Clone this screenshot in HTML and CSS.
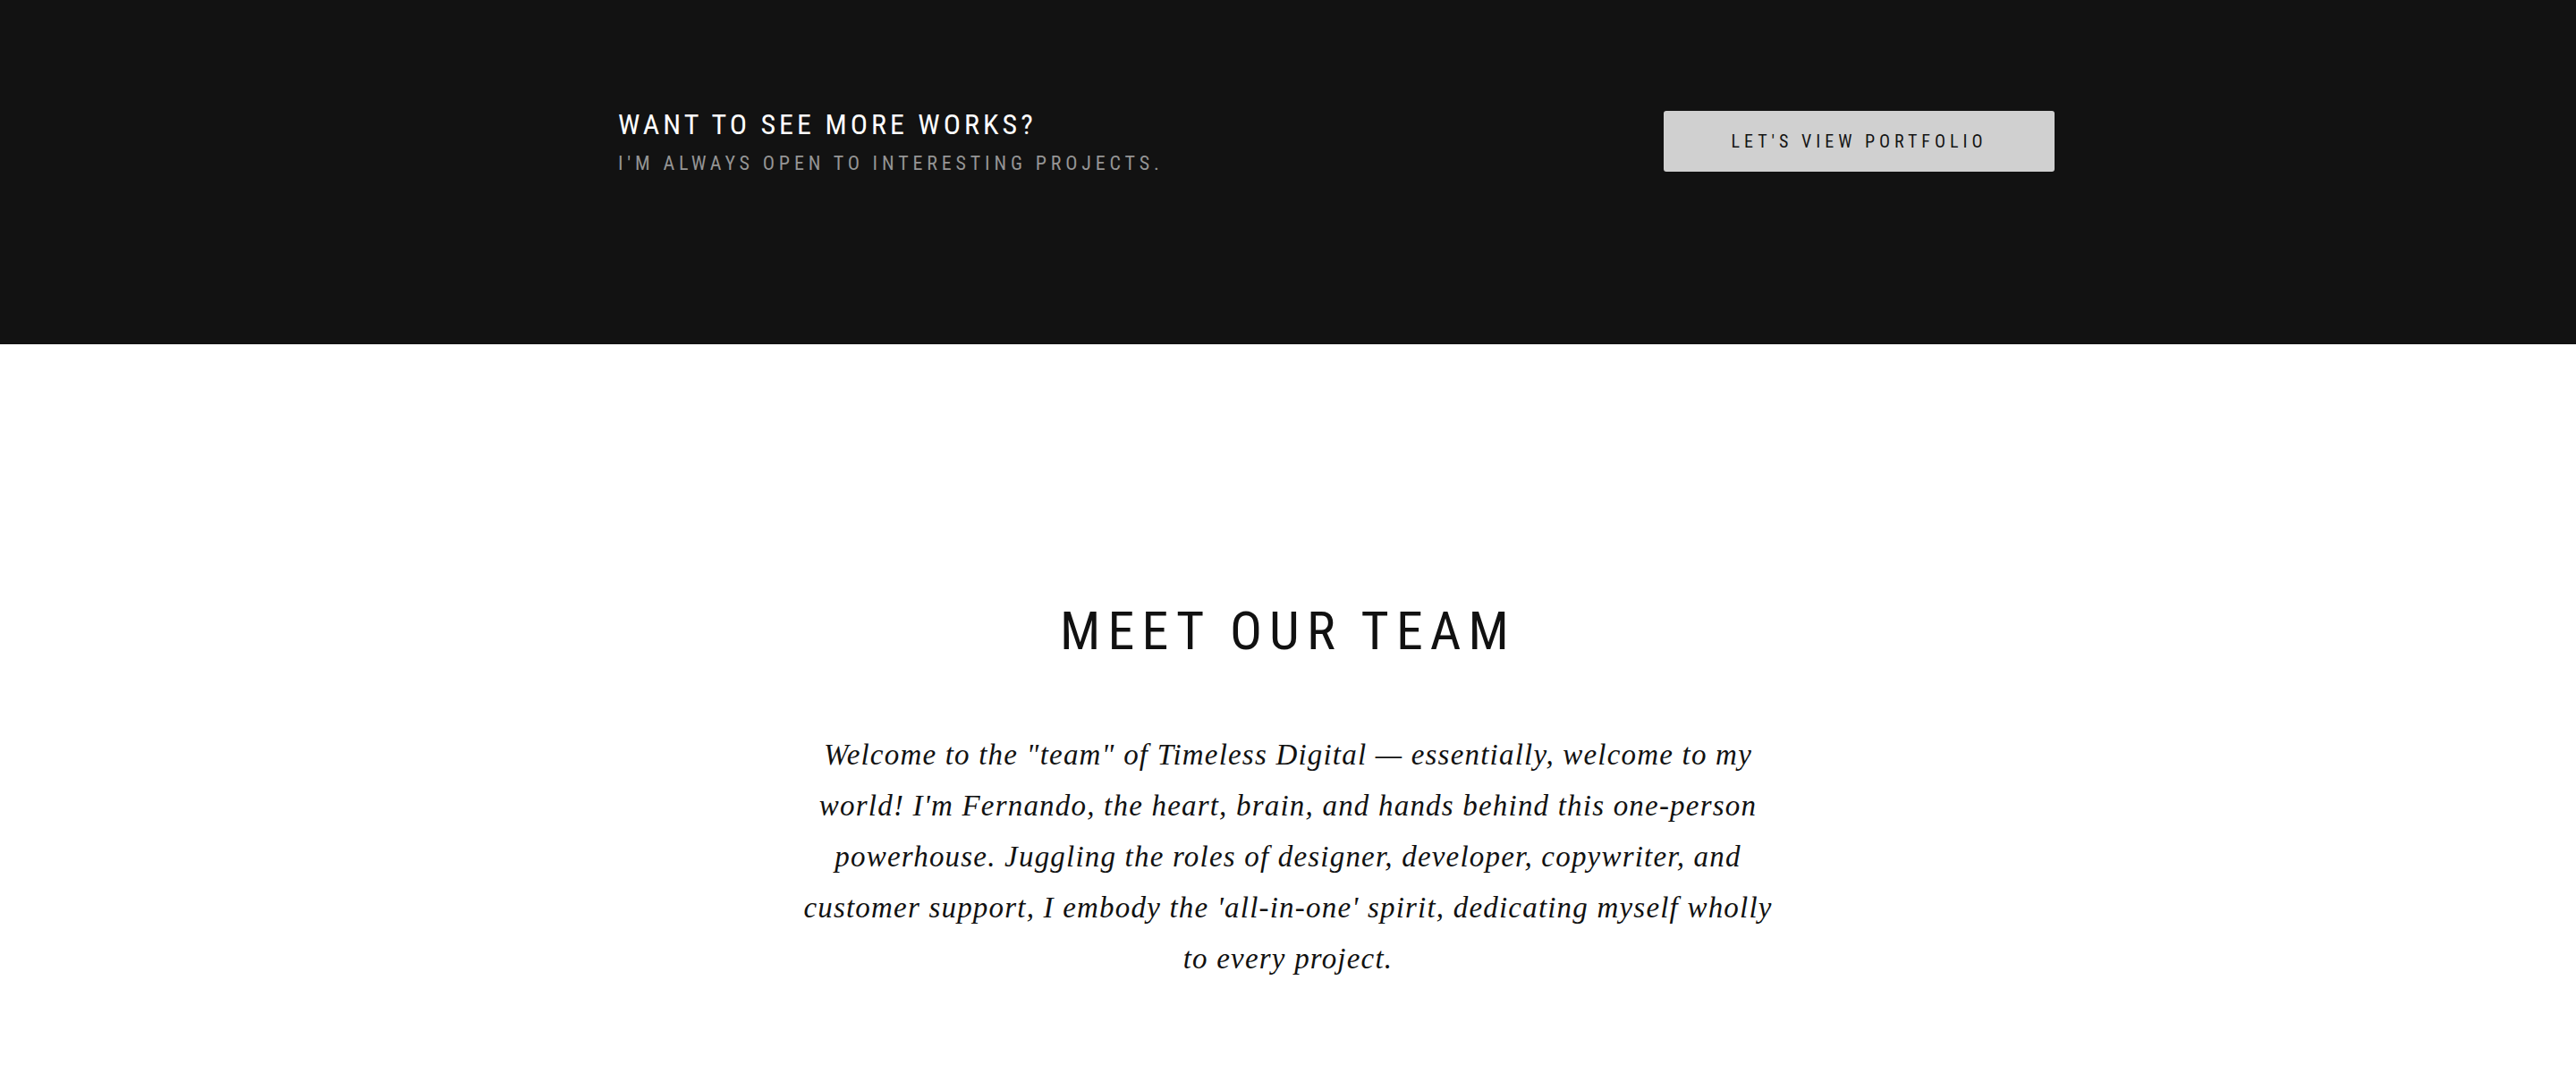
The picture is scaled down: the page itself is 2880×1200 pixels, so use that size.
FILE: index.html
```html
<!DOCTYPE html>
<html lang="en">
<head>
<meta charset="utf-8">
<title>Meet our team</title>
<link rel="stylesheet" href="styles.css">
</head>
<body>
<section class="cta">
  <div class="cta-row">
    <div class="cta-text">
      <h2 class="cta-title">WANT TO SEE MORE WORKS?</h2>
      <p class="cta-sub">I'M ALWAYS OPEN TO INTERESTING PROJECTS.</p>
    </div>
    <a class="cta-btn" href="#">LET'S VIEW PORTFOLIO</a>
  </div>
</section>
<section class="team">
  <h1 class="team-title">MEET OUR TEAM</h1>
  <p class="team-intro">Welcome to the "team" of Timeless Digital — essentially, welcome to my world! I'm Fernando, the heart, brain, and hands behind this one-person powerhouse. Juggling the roles of designer, developer, copywriter, and customer support, I embody the 'all-in-one' spirit, dedicating myself wholly to every project.</p>
</section>
</body>
</html>
```
FILE: styles.css
```css
html, body {
  margin: 0;
  padding: 0;
  background: #ffffff;
}

body {
  font-family: Roboto, "Liberation Sans", sans-serif;
  color: #111111;
}

.cta {
  background: #121212;
  height: 385px;
  box-sizing: border-box;
  padding: 120px 583px 0 691px;
}

.cta-row {
  display: flex;
  align-items: center;
  justify-content: space-between;
}

.cta-title {
  margin: 0;
  font-family: Roboto, sans-serif;
  font-weight: 400;
  font-stretch: 75%;
  font-size: 32px;
  line-height: 38px;
  letter-spacing: 4.05px;
  color: #ffffff;
}

.cta-sub {
  margin: 12px 0 0;
  font-family: Roboto, sans-serif;
  font-stretch: 75%;
  font-size: 22px;
  line-height: 26px;
  letter-spacing: 4.85px;
  color: #959595;
}

.cta-btn {
  display: flex;
  align-items: center;
  justify-content: center;
  width: 437px;
  height: 68px;
  box-sizing: border-box;
  background: #d0d0d0;
  border-radius: 3px;
  font-family: Roboto, sans-serif;
  font-stretch: 75%;
  font-size: 20px;
  letter-spacing: 5px;
  color: #151515;
  text-decoration: none;
}

.team {
  padding-top: 285px;
  display: flex;
  flex-direction: column;
  align-items: center;
}

.team-title {
  margin: 0;
  font-family: Roboto, sans-serif;
  font-weight: 400;
  font-stretch: 75%;
  font-size: 60px;
  line-height: 72px;
  letter-spacing: 8.1px;
  color: #111111;
}

.team-intro {
  margin: 74px 0 0;
  width: 1090px;
  font-family: "Liberation Serif", serif;
  font-style: italic;
  font-size: 33px;
  line-height: 57px;
  letter-spacing: 1.2px;
  text-align: center;
  color: #111111;
}
```
